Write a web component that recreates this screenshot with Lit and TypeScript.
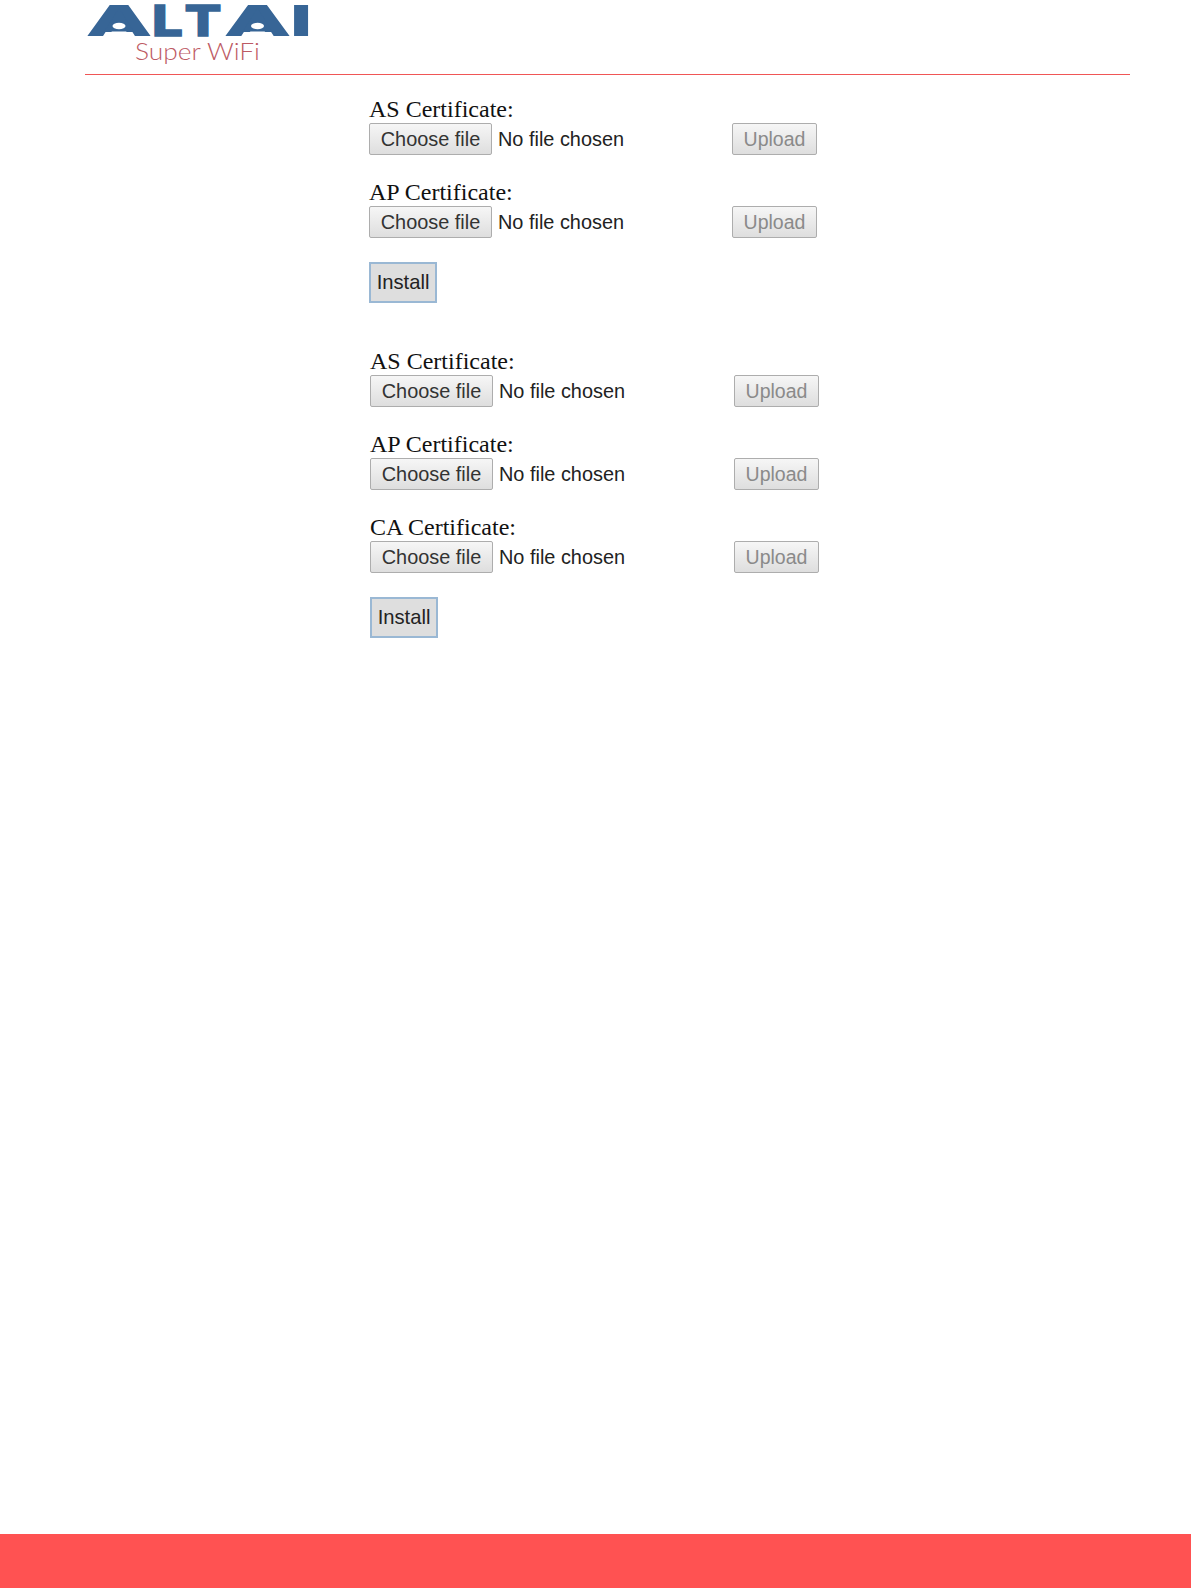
import { LitElement, html, css, svg } from "lit";
import { customElement } from "lit/decorators.js";

@customElement("app-root")
export class AppRoot extends LitElement {
  static styles = css`
    :host { display: flex; flex-direction: column; min-height: 100vh; background: #fff; }
    .head { height: 74px; padding-left: 85px; box-sizing: border-box; }
    .logo { display: block; }
    .rule { height: 1px; margin: 0 61px 0 85px; background: #f05656; }
    .main { flex: 1; padding-left: 369px; padding-top: 22px; }
    .form { width: 460px; }
    .form + .form { margin: 46px 0 0 1px; }
    .form + .form .row { width: 449px; }
    .field { margin-bottom: 25px; }
    .field.last { margin-bottom: 24px; }
    .label { font: 24px/24px "Liberation Serif", serif; color: #111; height: 26px; }
    .row { display: flex; align-items: center; width: 448px; }
    .btn { box-sizing: border-box; height: 32px; border: 1px solid #adadad; border-radius: 2px; background: linear-gradient(#f6f6f6, #dedede); font: 19.9px "Liberation Sans", sans-serif; color: #333; padding: 0; }
    .choose { width: 123px; }
    .none { font: 19.9px "Liberation Sans", sans-serif; color: #222; margin-left: 6px; flex: 1; }
    .upload { width: 85px; color: #8a8a8a; font-size: 19.5px; }
    .install { box-sizing: border-box; display: block; width: 68px; height: 41px; border: 2px solid #9ab8d4; background: #dedede; font: 20.2px "Liberation Sans", sans-serif; color: #222; padding: 0; }
    .foot { height: 54px; background: #ff5252; }
  `;

  private field(name: string, last = false) {
    return html`<div class="field ${last ? "last" : ""}">
      <div class="label">${name} Certificate:</div>
      <div class="row">
        <button class="btn choose">Choose file</button>
        <span class="none">No file chosen</span>
        <button class="btn upload" disabled>Upload</button>
      </div>
    </div>`;
  }

  private letter(ch: string, x: number, len: number, weight = 0) {
    return svg`<text x=${x} y="36" font-family="DejaVu Sans" font-weight="700" font-size="42.5" fill="#376596" stroke="#376596" stroke-width=${weight} textLength=${len} lengthAdjust="spacingAndGlyphs">${ch}</text>`;
  }

  private counter(cx: number) {
    const blue = "#376596";
    return svg`
      <path d="M${cx} 8 L${cx + 15} 32 L${cx - 15} 32 Z" fill=${blue}></path>
      <ellipse cx=${cx} cy="26" rx="6.5" ry="3.2" fill="#fff"></ellipse>
      <path d="M${cx - 15} 37 L${cx - 7} 31.5 L${cx + 7} 31.5 L${cx + 15} 37 Z" fill="#fff"></path>`;
  }

  private logo() {
    return svg`<svg class="logo" width="240" height="70" viewBox="0 0 240 70">
      ${this.letter("A", 2, 64)}
      ${this.letter("L", 65.4, 32, 1.4)}
      ${this.letter("T", 101, 34, 1.4)}
      ${this.letter("A", 140, 65)}
      ${this.letter("I", 202.2, 27.7)}
      ${this.counter(34)}
      ${this.counter(172.5)}
      <text x="50" y="60" font-family="Lato, Open Sans, sans-serif" font-weight="300" font-size="24" fill="#bd5a64" textLength="125" lengthAdjust="spacingAndGlyphs">Super WiFi</text>
    </svg>`;
  }

  render() {
    return html`
      <div class="head">${this.logo()}</div>
      <div class="rule"></div>
      <div class="main">
        <div class="form">
          ${this.field("AS")}${this.field("AP", true)}
          <button class="install">Install</button>
        </div>
        <div class="form">
          ${this.field("AS")}${this.field("AP")}${this.field("CA", true)}
          <button class="install">Install</button>
        </div>
      </div>
      <div class="foot"></div>
    `;
  }
}
